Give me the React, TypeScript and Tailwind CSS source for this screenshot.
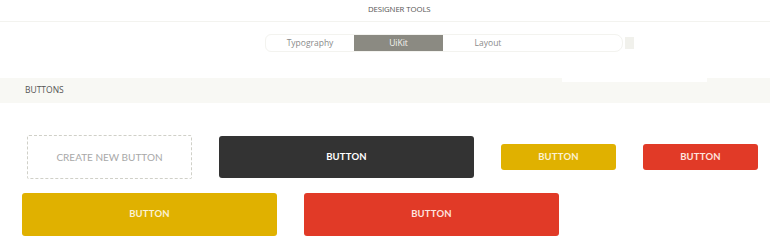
import React from 'react';

const tabs = ['Typography', 'UIKit', 'Layout'];

function Btn({ className, children }: { className: string; children: React.ReactNode }) {
  return (
    <button
      className={`flex items-center justify-center rounded-[3px] font-['Lato',sans-serif] font-bold text-[9.5px] tracking-[0.2px] ${className}`}
    >
      {children}
    </button>
  );
}

export default function App() {
  return (
    <div className="w-[770px] h-[242px] bg-white overflow-hidden font-['Open_Sans',sans-serif]">
      <div className="h-[22px] border-b border-[#f3f3ef] flex pl-[368px]">
        <span className="text-[7.8px] leading-[19px] text-[#555] tracking-[-0.1px]">DESIGNER TOOLS</span>
      </div>

      <div className="h-[56px] pt-[12px] flex items-start">
        <div className="ml-[265px] flex items-center">
          <div className="w-[358px] h-[18px] flex rounded-l-[6px] rounded-r-[8px] border border-[#f3f3ef] overflow-hidden">
            {tabs.map((t) => (
              <div
                key={t}
                className={
                  t === 'UIKit'
                    ? 'w-[89px] bg-[#8b8a82] text-[#f4f4f0] text-[8.5px] flex items-center justify-center'
                    : t === 'Typography'
                      ? 'w-[88px] text-[#8a8a8a] text-[8.5px] flex items-center justify-center'
                      : 'w-[90px] text-[#8a8a8a] text-[8.5px] flex items-center justify-center'
                }
              >
                {t === 'UIKit' ? 'UiKit' : t}
              </div>
            ))}
          </div>
          <div className="ml-[2px] w-[9px] h-[12px] bg-[#f1f1ec]" />
        </div>
      </div>

      <div className="relative h-[25px] bg-[#f8f8f4] flex items-center pl-[25px]">
        <span className="text-[8.5px] text-[#555]">BUTTONS</span>
        <div className="absolute left-[562px] top-0 w-[145px] h-[4px] bg-white" />
      </div>

      <div className="pt-[32px]">
        <div className="flex items-center gap-[27px] pl-[27px] h-[44px]">
          <button className="w-[165px] h-[44px] border border-dashed border-[#d0d0c8] rounded-[2px] text-[#a8a8a8] font-['Lato',sans-serif] text-[10px]">
            CREATE NEW BUTTON
          </button>
          <Btn className="w-[255px] h-[42px] bg-[#333333] text-white">BUTTON</Btn>
          <Btn className="w-[115px] h-[26px] bg-[#e0b100] text-[#fbf2d4]">BUTTON</Btn>
          <Btn className="w-[115px] h-[26px] bg-[#e13a27] text-[#fde3df]">BUTTON</Btn>
        </div>
        <div className="flex gap-[27px] pl-[22px] mt-[14px]">
          <Btn className="w-[255px] h-[43px] bg-[#e0b100] text-[#fbf2d4]">BUTTON</Btn>
          <Btn className="w-[255px] h-[43px] bg-[#e13a27] text-[#fde3df]">BUTTON</Btn>
        </div>
      </div>
    </div>
  );
}
